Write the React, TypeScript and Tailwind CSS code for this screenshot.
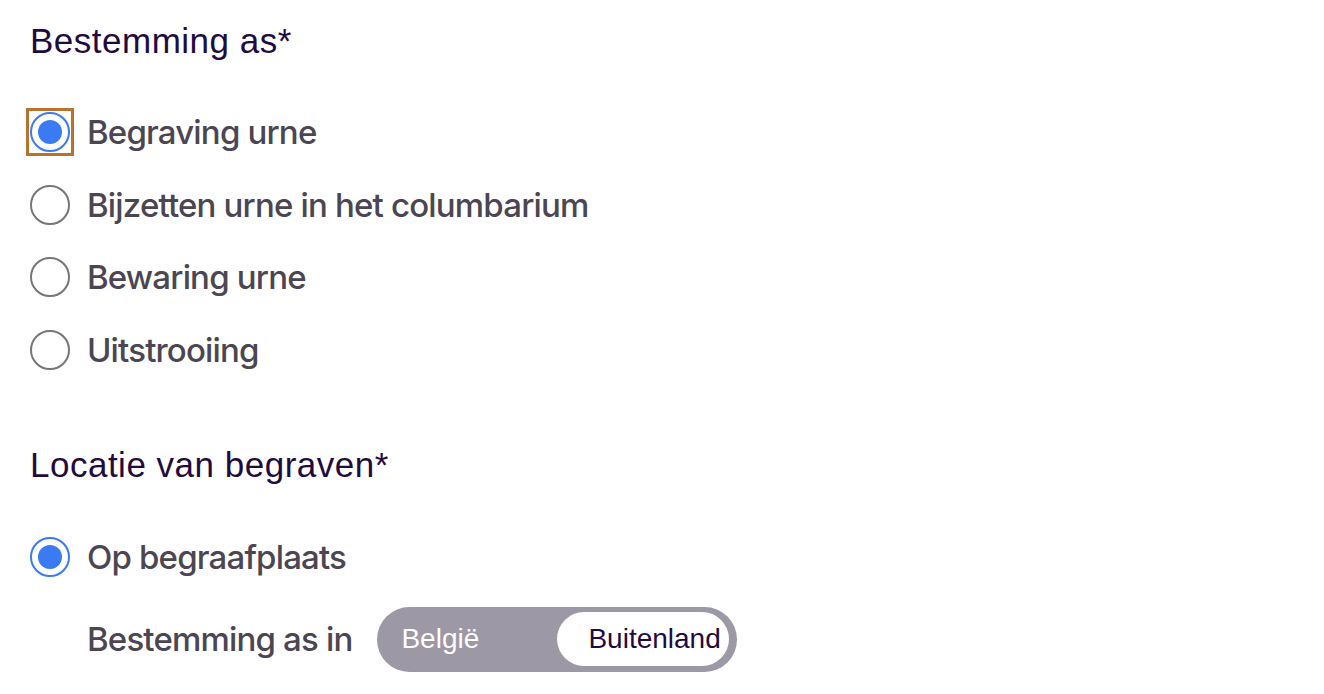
import React, { useState } from "react";

const headingCls =
  "text-[35px] leading-[40px] tracking-[0.5px] text-[#1f0b3f] font-['Liberation_Sans',Arial,sans-serif]";
const labelCls =
  "text-[33px] leading-[40px] font-medium tracking-[-0.025em] text-[#4b4651] font-['Inter','Liberation_Sans',sans-serif]";

const Radio = ({ checked, focused }: { checked: boolean; focused?: boolean }) => (
  <div
    className={
      "w-10 h-10 flex items-center justify-center " +
      (focused ? "outline-[3px] outline-solid outline-[#b8722c] outline-offset-[1px]" : "")
    }
  >
    {checked ? (
      <div className="w-10 h-10 rounded-full border-2 border-[#3a7af2] bg-white flex items-center justify-center">
        <div className="w-6 h-6 rounded-full bg-[#3a7af2]" />
      </div>
    ) : (
      <div className="w-10 h-10 rounded-full border-2 border-[#767676] bg-white" />
    )}
  </div>
);

const RadioRow = ({
  label,
  checked,
  focused,
  onClick,
}: {
  label: string;
  checked: boolean;
  focused?: boolean;
  onClick: () => void;
}) => (
  <div className="h-[72.5px] flex items-center cursor-pointer" onClick={onClick}>
    <Radio checked={checked} focused={focused} />
    <span className={"ml-[17px] " + labelCls}>{label}</span>
  </div>
);

export default function App() {
  const [dest, setDest] = useState("Begraving urne");
  const [abroad, setAbroad] = useState(true);
  const options = ["Begraving urne", "Bijzetten urne in het columbarium", "Bewaring urne", "Uitstrooiing"];

  return (
    <div className="min-h-screen bg-white pl-[30px] pt-[21px]">
      <h2 className={headingCls}>Bestemming as*</h2>
      <div className="mt-[35px] flex flex-col">
        {options.map((o, i) => (
          <RadioRow key={o} label={o} checked={dest === o} focused={i === 0} onClick={() => setDest(o)} />
        ))}
      </div>

      <h2 className={"mt-[59px] " + headingCls}>Locatie van begraven*</h2>
      <div className="mt-[36px]">
        <RadioRow label="Op begraafplaats" checked={true} onClick={() => {}} />
      </div>

      <div className="mt-[13px] ml-[57px] flex items-center">
        <span className={labelCls}>Bestemming as in</span>
        <div className="ml-[25px] w-[360px] h-[65px] rounded-full bg-[#9c98a5] flex items-center pr-[8px] font-['Liberation_Sans',Arial,sans-serif] text-[28px]">
          <button
            onClick={() => setAbroad(false)}
            className={
              "h-[54px] flex items-center rounded-full " +
              (abroad ? "flex-1 pl-[24px] text-white" : "w-[172px] ml-[6px] pl-[24px] bg-white text-[#1f0b3f]")
            }
          >
            België
          </button>
          <button
            onClick={() => setAbroad(true)}
            className={
              "h-[54px] flex items-center rounded-full whitespace-nowrap " +
              (abroad ? "w-[172px] pl-[31px] bg-white text-[#1f0b3f]" : "flex-1 pl-[31px] text-white")
            }
          >
            Buitenland
          </button>
        </div>
      </div>
    </div>
  );
}
